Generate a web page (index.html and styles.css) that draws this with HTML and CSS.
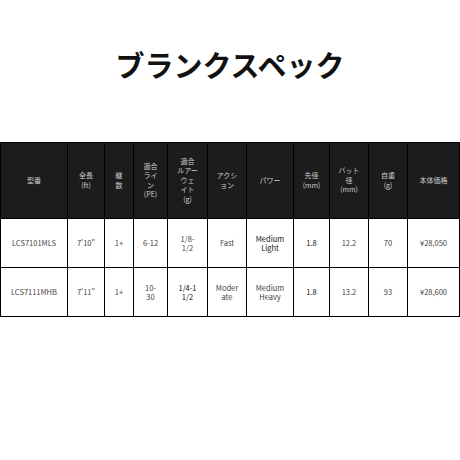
FILE: index.html
```html
<!DOCTYPE html>
<html lang="ja">
<head>
<meta charset="utf-8">
<link rel="stylesheet" href="styles.css">
</head>
<body>
<h1 class="title">ブランクスペック</h1>
<table class="spec">
  <colgroup>
    <col class="c1"><col class="c2"><col class="c3"><col class="c4"><col class="c5"><col class="c6"><col class="c7"><col class="c8"><col class="c9"><col class="c10"><col class="c11">
  </colgroup>
  <thead>
    <tr>
      <th>型番</th>
      <th>全長<br>(ft)</th>
      <th>継<br>数</th>
      <th>適合<br>ライ<br>ン<br>(PE)</th>
      <th>適合<br>ルアー<br>ウェ<br>イト<br>(g)</th>
      <th>アクシ<br>ョン</th>
      <th>パワー</th>
      <th>先径<br>(mm)</th>
      <th>バット<br>径<br>(mm)</th>
      <th>自重<br>(g)</th>
      <th>本体価格</th>
    </tr>
  </thead>
  <tbody>
    <tr>
      <td>LCS7101MLS</td>
      <td>7'10"</td>
      <td>1+</td>
      <td>6-12</td>
      <td>1/8-<br>1/2</td>
      <td>Fast</td>
      <td class="b">Medium<br>Light</td>
      <td class="b">1.8</td>
      <td>12.2</td>
      <td>70</td>
      <td>¥28,050</td>
    </tr>
    <tr>
      <td>LCS7111MHB</td>
      <td>7'11"</td>
      <td>1+</td>
      <td>10-<br>30</td>
      <td class="b">1/4-1<br>1/2</td>
      <td>Moder<br>ate</td>
      <td>Medium<br>Heavy</td>
      <td class="b">1.8</td>
      <td>13.2</td>
      <td>93</td>
      <td>¥28,600</td>
    </tr>
  </tbody>
</table>
</body>
</html>
```
FILE: styles.css
```css
html, body {
  margin: 0;
  padding: 0;
  background: #fff;
}
body {
  width: 460px;
  height: 460px;
  overflow: hidden;
  font-family: "Noto Sans CJK JP", "Noto Sans", sans-serif;
}
.title {
  margin: 0;
  padding-top: 44px;
  height: 142px;
  box-sizing: border-box;
  text-align: center;
  font-size: 29px;
  line-height: 40px;
  font-weight: 700;
  color: #111;
}
.spec {
  border-collapse: collapse;
  table-layout: fixed;
  width: 459px;
  margin-left: 0;
  border-top: 1px solid #999;
}
.spec th, .spec td {
  border: 1px solid #000;
  padding: 0;
  text-align: center;
  vertical-align: middle;
  font-size: 7px;
  line-height: 9.5px;
}
.spec th {
  background: #1c1c1c;
  color: #ccc;
  font-weight: 400;
  height: 75px;
}
.spec td {
  background: #fff;
  color: #444;
  height: 48px;
  font-size: 7.5px;
}
.spec td.b {
  color: #111;
  font-weight: 400;
}
.c1 { width: 67px; }
.c2 { width: 37px; }
.c3 { width: 29px; }
.c4 { width: 34px; }
.c5 { width: 40px; }
.c6 { width: 39px; }
.c7 { width: 47px; }
.c8 { width: 36px; }
.c9 { width: 39px; }
.c10 { width: 39px; }
.c11 { width: 52px; }
```
